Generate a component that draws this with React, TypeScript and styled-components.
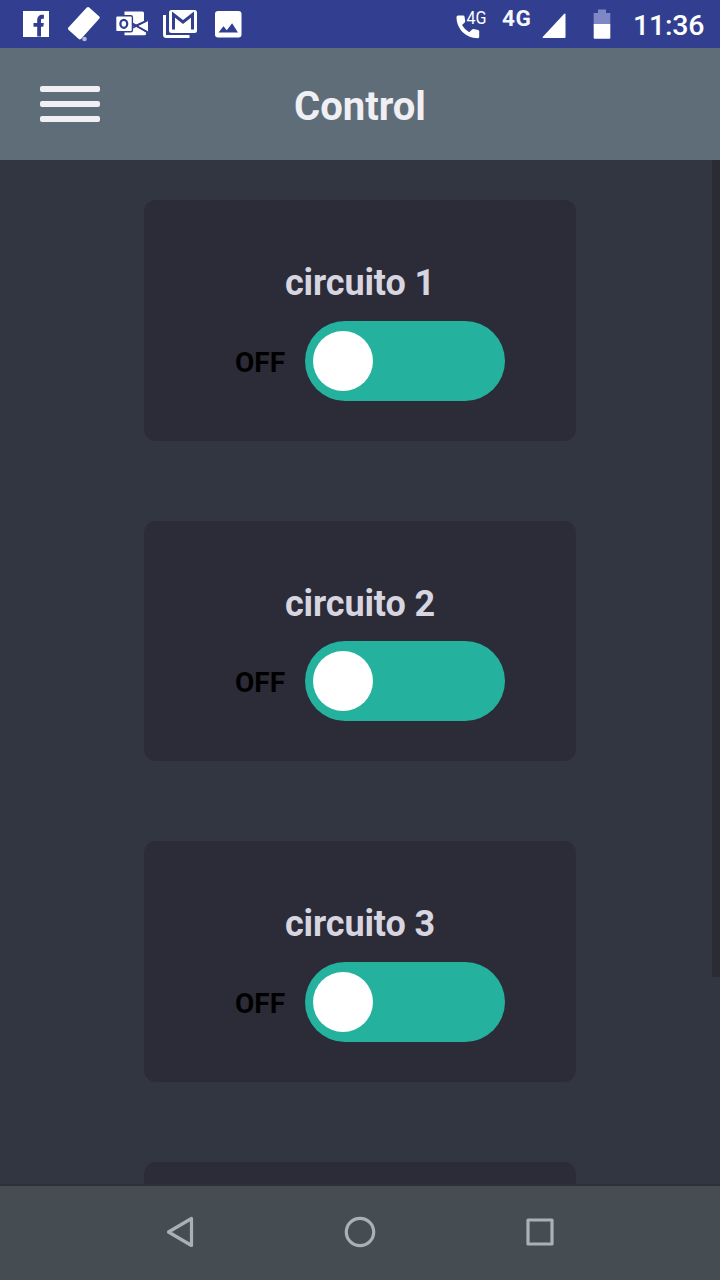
import React from "react";
import styled, { createGlobalStyle } from "styled-components";

const GlobalStyle = createGlobalStyle`
  * { box-sizing: border-box; }
  body { margin: 0; font-family: Roboto, "Liberation Sans", sans-serif; background: #323541; }
`;

const Screen = styled.div`
  width: 720px;
  height: 1280px;
  display: flex;
  flex-direction: column;
  overflow: hidden;
  background: #323641;
`;

const StatusBar = styled.div`
  flex: none;
  height: 48px;
  display: flex;
  justify-content: space-between;
  padding: 0 16px 0 12px;
  background: #323f90;
  color: #fff;
`;

const StatusGroup = styled.div`
  display: flex;
  svg { display: block; flex: none; }
`;

const NetworkLabel = styled.span`
  width: 37px;
  padding-top: 5px;
  font-size: 22.5px;
  line-height: 26px;
  font-weight: 700;
  letter-spacing: 0.5px;
  color: #f4f6ff;
`;

const Clock = styled.span`
  width: 71px;
  padding-top: 2px;
  font-size: 28.5px;
  line-height: 48px;
  font-weight: 500;
  letter-spacing: -0.2px;
  white-space: nowrap;
`;

const Header = styled.header`
  flex: none;
  height: 112px;
  display: grid;
  grid-template-columns: 60px 1fr 60px;
  align-items: center;
  padding: 0 40px;
  background: #5f6d79;
`;

const MenuButton = styled.button`
  display: flex;
  flex-direction: column;
  gap: 9px;
  width: 60px;
  padding: 0;
  border: 0;
  background: none;
`;

const MenuLine = styled.span`
  height: 6px;
  border-radius: 2px;
  background: #f0eff4;
`;

const Title = styled.h1`
  margin: 0;
  padding-top: 6px;
  text-align: center;
  font-size: 40px;
  line-height: 48px;
  font-weight: 700;
  color: #f0eff4;
`;

const Content = styled.main`
  flex: 1;
  min-height: 0;
  display: flex;
  overflow: hidden;
  padding-left: 144px;
  border-bottom: 2px solid #2d303a;
`;

const CardList = styled.div`
  flex: none;
  width: 432px;
  display: flex;
  flex-direction: column;
  gap: 80px;
  padding-top: 40px;
`;

const ScrollThumb = styled.div`
  width: 8px;
  height: 817px;
  margin-left: auto;
  background: #2b2b36;
`;

const Card = styled.section`
  flex: none;
  height: 240.67px;
  padding-top: 60px;
  border-radius: 12px;
  background: #2b2c37;
`;

const CardTitle = styled.h2`
  margin: 0;
  text-align: center;
  font-size: 36px;
  line-height: 46px;
  font-weight: 700;
  letter-spacing: -0.1px;
  color: #d7d5e0;
`;

const SwitchRow = styled.div`
  display: flex;
  align-items: center;
  justify-content: flex-end;
  gap: 20px;
  padding: 14.67px 71px 0 0;
`;

const SwitchLabel = styled.span`
  padding-top: 4px;
  font-size: 28px;
  line-height: 34px;
  font-weight: 700;
  color: #000;
`;

const Track = styled.button<{ $on: boolean }>`
  display: flex;
  align-items: center;
  justify-content: ${(p) => (p.$on ? "flex-end" : "flex-start")};
  width: 200px;
  height: 80px;
  padding: 0 8px;
  border: 0;
  border-radius: 40px;
  background: #24b29f;
`;

const Knob = styled.span`
  width: 60px;
  height: 60px;
  border-radius: 50%;
  background: #fff;
`;

const NavBar = styled.nav`
  flex: none;
  height: 94px;
  display: flex;
  justify-content: center;
  gap: 132px;
  padding-top: 22px;
  background: #464d52;
  svg { fill: none; stroke: #aab1b5; stroke-width: 3.2; stroke-linejoin: round; }
`;

const Facebook = () => (
  <svg width="48" height="48">
    <rect x="11" y="11" width="26" height="26" fill="#fff" />
    <path d="M25.200 36.600V26.800h-3.700v-3.800h3.700v-2.400c0-4 2-5.900 5.300-5.900h1.400v4h-1.300c-1.200 0-1.600.6-1.600 1.800v2.500h2.800l-.5 3.800h-2.300v9.800z" fill="#323f90" />
  </svg>
);

const Eraser = () => (
  <svg width="48" height="48">
    <path d="M29.200 7.400 39.300 16.400q1 1 .1 2.100L21.200 38.700q-1.300 1.300-2.700.1L8.400 29.800q-1.100-1.200 0-2.300L26.800 7.600q1.200-1 2.400-.2z" fill="#fff" />
    <circle cx="24.500" cy="39" r="2.300" fill="#aeb7e3" />
  </svg>
);

const Outlook = () => (
  <svg width="48" height="48">
    <path d="M16.500 11.500h18q1.500 0 1.500 1.500v8L27 25H16.500z" fill="#fff" />
    <path d="M16.500 35.300V28l11-2L38 32.500q.5 2.800-1.500 2.800z" fill="#fff" />
    <path d="M40 20.500v11.300L29.500 26z" fill="#fff" />
    <path d="M23 22.500l5.500 3.200L39.500 20.500M23 28.500l5.500-2.500L39.500 32" fill="none" stroke="#323f90" strokeWidth="1.800" />
    <rect x="7.600" y="15.800" width="16.800" height="16" rx="1.500" fill="#fff" stroke="#323f90" strokeWidth="1.400" />
    <ellipse cx="15.800" cy="23.800" rx="3.400" ry="4" fill="none" stroke="#323f90" strokeWidth="2.300" />
  </svg>
);

const Mail = () => (
  <svg width="48" height="48">
    <path d="M8.500 15v19.500q0 2 2 2H33.500" fill="none" stroke="#fff" strokeWidth="3" />
    <rect x="13" y="10" width="28" height="23" rx="2.500" fill="#fff" />
    <path d="M17.500 29.500V14.500l9.500 7.500 9.500-7.500v15" fill="none" stroke="#323f90" strokeWidth="3" />
  </svg>
);

const Photo = () => (
  <svg width="48" height="48">
    <rect x="11" y="11" width="26.500" height="26.500" rx="3" fill="#fff" />
    <path d="M14.500 32.500l5-6.200 3.300 3.900 5.300-6.900 5.900 9.200z" fill="#323f90" />
  </svg>
);

const CallSignal = () => (
  <svg width="50" height="48">
    <path d="M5.600 15h5.200q1 0 1.200 1l.7 4.600q.1.800-.5 1.400l-2.700 2.500q2.600 4.700 7.200 7.200l2.900-2.800q.6-.6 1.400-.4l4.600.9q1.100.2 1.100 1.300v5.500q0 1.500-1.500 1.500C13 37.700 4 28 4 16.500Q4 15 5.600 15z" fill="#fff" transform="translate(.5 .5)" />
    <text x="14.500" y="24" fill="#fff" fontSize="17.500" textLength="20" lengthAdjust="spacingAndGlyphs">4G</text>
  </svg>
);

const Signal = () => (
  <svg width="50" height="48">
    <path d="M25.500 14.500v22.500q0 1-1 1H3.500q-1.700 0-.6-1.200L24 13.900q1.500-1.200 1.500.6z" fill="#fff" transform="translate(1 0)" />
  </svg>
);

const Battery = () => (
  <svg width="44" height="48">
    <path d="M4.700 25V13H9V9.500h8V13h4.300v12z" fill="#7f88c5" />
    <path d="M4.700 24h16.600v14q0 .8-.8.800h-15q-.8 0-.8-.8z" fill="#fff" />
  </svg>
);

const Back = () => (
  <svg width="48" height="48"><path d="M35.500 10.500v27L12.500 24z" /></svg>
);
const Home = () => (
  <svg width="48" height="48"><circle cx="24" cy="24" r="13.700" /></svg>
);
const Recents = () => (
  <svg width="48" height="48"><rect x="12" y="12" width="24" height="24" /></svg>
);

const circuits = ["circuito 1", "circuito 2", "circuito 3"];

function CircuitCard({ name, on = false }: { name: string; on?: boolean }) {
  return (
    <Card>
      <CardTitle>{name}</CardTitle>
      <SwitchRow>
        <SwitchLabel>{on ? "ON" : "OFF"}</SwitchLabel>
        <Track $on={on} aria-label={name}>
          <Knob />
        </Track>
      </SwitchRow>
    </Card>
  );
}

export default function App() {
  return (
    <>
      <GlobalStyle />
      <Screen>
        <StatusBar>
          <StatusGroup>
            <Facebook />
            <Eraser />
            <Outlook />
            <Mail />
            <Photo />
          </StatusGroup>
          <StatusGroup>
            <CallSignal />
            <NetworkLabel>4G</NetworkLabel>
            <Signal />
            <Battery />
            <Clock>11:36</Clock>
          </StatusGroup>
        </StatusBar>
        <Header>
          <MenuButton aria-label="Menu">
            <MenuLine />
            <MenuLine />
            <MenuLine />
          </MenuButton>
          <Title>Control</Title>
        </Header>
        <Content>
          <CardList>
            {circuits.map((name) => (
              <CircuitCard key={name} name={name} />
            ))}
            <Card />
          </CardList>
          <ScrollThumb />
        </Content>
        <NavBar>
          <Back />
          <Home />
          <Recents />
        </NavBar>
      </Screen>
    </>
  );
}
